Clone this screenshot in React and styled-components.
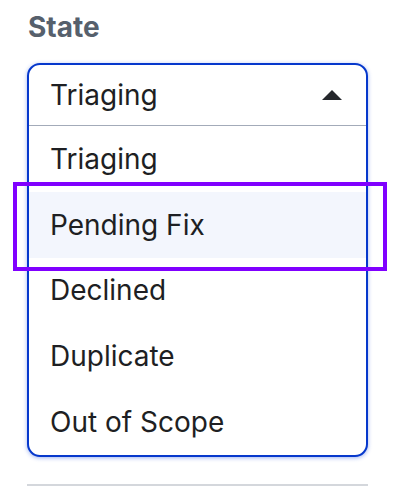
import React from "react";
import styled, { createGlobalStyle } from "styled-components";

const Global = createGlobalStyle`
  html, body { margin: 0; padding: 0; background: #ffffff; }
  body { font-family: Inter, "Noto Sans", sans-serif; -webkit-font-smoothing: antialiased; }
  * { box-sizing: border-box; }
`;

const Page = styled.div`
  position: relative;
  width: 414px;
  height: 492px;
  padding: 10px 0 0 27px;
`;

const Field = styled.div`
  width: 341px;
  display: flex;
  flex-direction: column;
`;

const Label = styled.div`
  font-size: 28px;
  line-height: 34px;
  font-weight: 700;
  color: #56606c;
  padding-left: 1px;
  margin-bottom: 19px;
`;

const Listbox = styled.div`
  border: 2px solid #0638cc;
  border-radius: 13px;
  box-shadow: 0 1px 4px rgba(20, 70, 220, 0.4);
  overflow: hidden;
  background: #fff;
`;

const Trigger = styled.div`
  height: 61px;
  display: flex;
  align-items: center;
  justify-content: space-between;
  padding: 0 24px 0 21px;
  border-bottom: 1px solid #a3abb9;
  font-size: 28px;
  line-height: 34px;
  color: #1e1f23;
`;

const Caret = styled.svg`
  width: 20px;
  height: 10px;
  display: block;
  margin-top: 0px;
`;

const Options = styled.ul`
  list-style: none;
  margin: 0;
  padding: 0;
`;

const Option = styled.li`
  height: 65.8px;
  display: flex;
  align-items: center;
  padding: 0 21px;
  font-size: 28px;
  line-height: 34px;
  color: #1e1f23;
  background: ${(p) => (p.$active ? "#f3f6fd" : "transparent")};
`;

const Divider = styled.div`
  height: 2px;
  background: #d4d7dc;
  margin-top: 27px;
`;

const Highlight = styled.div`
  position: absolute;
  left: 13px;
  top: 182px;
  width: 374px;
  height: 89px;
  border: 4px solid #8000ff;
  pointer-events: none;
`;

const options = ["Triaging", "Pending Fix", "Declined", "Duplicate", "Out of Scope"];

export default function App() {
  return (
    <>
      <Global />
      <Page>
        <Field>
          <Label>State</Label>
          <Listbox>
            <Trigger>
              <span>Triaging</span>
              <Caret viewBox="0 0 20 10" aria-hidden="true">
                <path d="M0 10 L10 0 L20 10 Z" fill="#25272c" />
              </Caret>
            </Trigger>
            <Options>
              {options.map((o) => (
                <Option key={o} $active={o === "Pending Fix"}>
                  {o}
                </Option>
              ))}
            </Options>
          </Listbox>
          <Divider />
        </Field>
        <Highlight />
      </Page>
    </>
  );
}
